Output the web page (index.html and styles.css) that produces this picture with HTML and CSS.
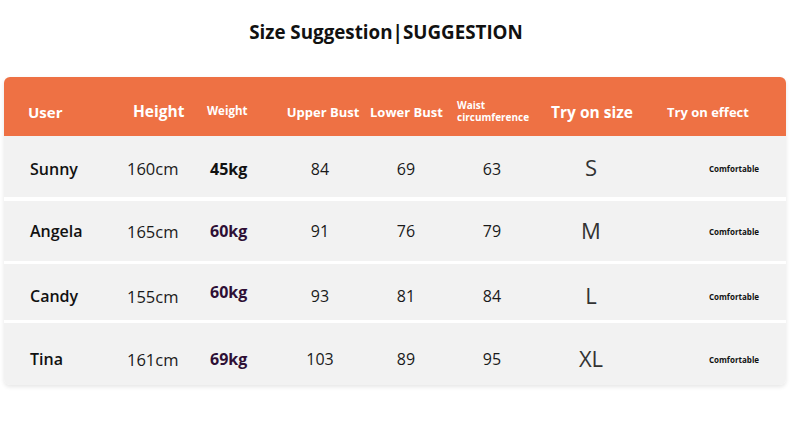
FILE: index.html
```html
<!DOCTYPE html>
<html lang="en">
<head>
<meta charset="utf-8">
<title>Size Suggestion</title>
<link rel="stylesheet" href="styles.css">
</head>
<body>
<div class="page">
  <h1 class="title">Size Suggestion|SUGGESTION</h1>
  <div class="card">
    <div class="row head">
      <div class="h h-user">User</div>
      <div class="h h-height">Height</div>
      <div class="h h-weight">Weight</div>
      <div class="h h-upper">Upper Bust</div>
      <div class="h h-lower">Lower Bust</div>
      <div class="h h-waist">Waist<br>circumference</div>
      <div class="h h-size">Try on size</div>
      <div class="h h-effect">Try on effect</div>
    </div>
    <div class="row body r1">
      <div class="c c-user">Sunny</div>
      <div class="c c-height">160cm</div>
      <div class="c c-weight">45kg</div>
      <div class="c c-num">84</div>
      <div class="c c-num">69</div>
      <div class="c c-num">63</div>
      <div class="c c-size">S</div>
      <div class="c c-effect">Comfortable</div>
    </div>
    <div class="row body r2">
      <div class="c c-user">Angela</div>
      <div class="c c-height">165cm</div>
      <div class="c c-weight purple">60kg</div>
      <div class="c c-num">91</div>
      <div class="c c-num">76</div>
      <div class="c c-num">79</div>
      <div class="c c-size">M</div>
      <div class="c c-effect">Comfortable</div>
    </div>
    <div class="row body r3">
      <div class="c c-user">Candy</div>
      <div class="c c-height">155cm</div>
      <div class="c c-weight purple">60kg</div>
      <div class="c c-num">93</div>
      <div class="c c-num">81</div>
      <div class="c c-num">84</div>
      <div class="c c-size">L</div>
      <div class="c c-effect">Comfortable</div>
    </div>
    <div class="row body r4">
      <div class="c c-user">Tina</div>
      <div class="c c-height">161cm</div>
      <div class="c c-weight purple">69kg</div>
      <div class="c c-num">103</div>
      <div class="c c-num">89</div>
      <div class="c c-num">95</div>
      <div class="c c-size">XL</div>
      <div class="c c-effect">Comfortable</div>
    </div>
  </div>
</div>
</body>
</html>
```

FILE: styles.css
```css
* { box-sizing: border-box; }
html, body { margin: 0; padding: 0; background: #ffffff; }
body {
  font-family: "Open Sans", "Noto Sans", "DejaVu Sans", sans-serif;
  color: #1a1a1a;
  width: 790px;
  height: 429px;
  overflow: hidden;
}
.page {
  padding: 18px 4px 0 4px;
}
.title {
  margin: 0;
  height: 59px;
  font-size: 18.8px;
  font-weight: 700;
  line-height: 28px;
  text-align: center;
  color: #111111;
  padding-right: 18px;
}
.card {
  width: 782px;
  border-radius: 6px;
  background: #ffffff;
  box-shadow: 0 2px 4px rgba(0,0,0,0.10);
  display: flex;
  flex-direction: column;
  gap: 4px;
  overflow: hidden;
}
.row {
  display: grid;
  grid-template-columns: 106px 85px 75px 100px 72px 100px 98px 146px;
  align-items: center;
}
.head {
  height: 59px;
  background: #ee7144;
  color: #ffffff;
  font-weight: 700;
  padding-top: 11px;
  margin-bottom: -4px;
}
.h { white-space: nowrap; }
.h-user { font-size: 15px; padding-left: 24px; }
.h-height { font-size: 15.5px; padding-left: 23px; margin-top: -3px; }
.h-weight { font-size: 11.5px; padding-left: 12px; margin-top: -3px; }
.h-upper { font-size: 13px; text-align: center; padding-left: 6px; }
.h-lower { font-size: 13px; text-align: center; padding-right: 2px; }
.h-waist { font-size: 10px; line-height: 12.5px; padding-left: 15px; margin-top: -2px; }
.h-size { font-size: 15.5px; text-align: center; padding-left: 2px; }
.h-effect { font-size: 13px; padding-left: 27px; }

.body { background: #f2f2f2; }
.r1 { height: 61px; padding-top: 4px; }
.r2 { height: 60px; margin-bottom: -1px; }
.r3 { height: 56px; padding-top: 8px; }
.r4 { height: 62px; margin-top: -1px; padding-top: 10px; }

.c { white-space: nowrap; }
.c-user { font-size: 16px; font-weight: 600; padding-left: 26px; color: #111; }
.c-height { font-size: 16.5px; padding-left: 17px; color: #1a1a1a; }
.c-weight { font-size: 16px; font-weight: 700; padding-left: 15px; color: #111; }
.c-weight.purple { color: #2e0f35; }
.r3 .c-weight { margin-top: -8px; }
.c-num { font-size: 16px; text-align: center; color: #1a1a1a; }
.c-size { font-size: 22px; text-align: center; color: #333333; margin-top: -3px; }
.c-effect { font-size: 8px; font-weight: 700; text-align: center; padding-left: 42px; color: #111; }
```
